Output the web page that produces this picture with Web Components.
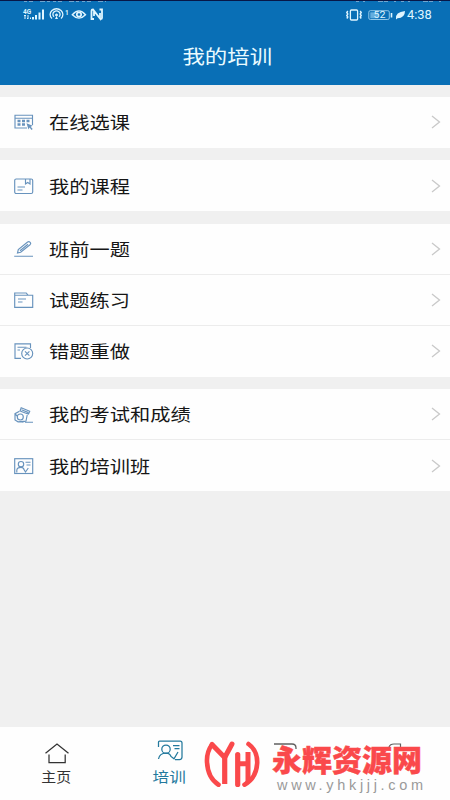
<!DOCTYPE html>
<html lang="zh-CN"><head><meta charset="utf-8"><title>我的培训</title>
<style>html,body{margin:0;height:100%;overflow:hidden}body{font-family:"Noto Sans CJK SC","Liberation Sans",sans-serif;background:#f0f0f0}</style></head>
<body><training-app></training-app>
<script>
const define=(name,html,fill)=>customElements.define(name,class extends HTMLElement{
 constructor(){super();this.attachShadow({mode:'open'}).innerHTML=html;if(fill)fill(this,this.shadowRoot);}
});
const icons={
 select:'<path d="M13 14H1V1.2H18.5V11M1 4.2H18.5"/><path d="M3.5 7h3M8 7h3M12.5 7h3M3.5 10.5h3M8 10.5h3" stroke-width="2.4"/><path d="M12.5 9.3L18.8 11.7L16.7 12.7L18.7 15L17.5 16L15.6 13.6L14.5 15.5Z" fill="#6893bd" stroke="none"/>',
 course:'<rect x=".7" y="1" width="18" height="14.5" rx="1.5"/><path d="M11.5 1V6L13.7 4.5L16 6V1M3.5 9H11M3.5 12H8.5"/>',
 pen:'<path d="M3.5 12L4.3 8.5L13.6 1Q15 .2 16.2 1.4Q17.2 2.5 16 3.7L6.7 11.2ZM6 9.7L14 3.2M.2 15.2H19"/>',
 folder:'<path d="M.7 15.4V1H12.2L14 3.2H18.7V15.4ZM.7 3.2H14M4 7H12M4 10H8.5"/>',
 wrong:'<path d="M7 15.4H1V.8H16.5V5M3.5 4.2H12.5M3.5 7H6"/><circle cx="13.2" cy="10.5" r="5.5"/><path d="M11 8.3L15.4 12.7M15.4 8.3L11 12.7"/>',
 exam:'<path d="M6 4L7.2 .8L15.7 4.2L14.5 7L12.5 6.2M6 4L14 7M5.5 4.2L1 6.7V13L4 14.8L12 14L13.2 8M1 6.7L3 9M8 15.3L12 14M11 15.2H19"/><circle cx="6.3" cy="10" r="3"/><path d="M7.5 2.8L14.5 5.6"/>',
 training:'<rect x=".7" y=".7" width="18" height="14.8"/><circle cx="7" cy="6.2" r="2.7"/><path d="M2.8 14.5V12Q3.2 9.3 7 9.3Q9.5 9.3 10.3 12L11.5 14L14.3 10M11.5 4.2H16.5M12.5 7H16.5"/>'
};
define('ui-icon',`<style>:host{display:block;width:20px;height:17px;flex:none;padding-top:1.4px}svg{display:block;overflow:visible}</style><svg width="20" height="17" fill="none" stroke="#6893bd" stroke-width="1.15"></svg>`,(h,r)=>r.querySelector('svg').innerHTML=icons[h.getAttribute('name')]);
define('menu-row',`<style>:host{display:flex;align-items:center;box-sizing:border-box;height:51px;padding:0 9px 0 14px;background:#fefefe;color:#161616}
:host([line]){border-bottom:1px solid #ececec}.label{margin-left:15px;font-size:17.6px;line-height:24px;white-space:nowrap;transform:scaleX(1.15);transform-origin:left}.arrow{margin-left:auto}</style>
<slot name="icon"></slot><span class="label"><slot></slot></span><svg class="arrow" width="10" height="14" fill="none" stroke="#c9c9c9" stroke-width="1.3"><path d="M1 1L8.5 7L1 13"/></svg>`);
define('menu-group',`<style>:host{display:flex;flex-direction:column;background:#fefefe}</style><slot></slot>`);
define('phone-status',`<style>:host{display:flex;height:29px;padding:0 18px 0 23px;align-items:center;justify-content:space-between;color:#dff5ff;box-sizing:border-box;border-top:1px solid #071747}svg{display:block;overflow:visible}.right{display:flex;align-items:center;gap:2px}.time{font:12.9px/16px Roboto,sans-serif;width:25px;white-space:nowrap}</style>
<svg width="82" height="14" fill="none" stroke="currentColor"><path d="M1 -6.5H83" stroke="#6ea6d0" stroke-width="1" stroke-dasharray="3 2 4 7 5 2 3 3"/><text x="0" y="5.5" font-family="Roboto" font-size="6.5" font-weight="bold" fill="currentColor" stroke="none">4G</text><path d="M2 7V11M1 8L2 7L3 8M5 7V11L4 10M7.5 11v-1.5" stroke-width="1"/><path d="M10 11.5V9M13 11.5V7M16.5 11.5V4.5M20 11.5V1.5" stroke-width="2"/><path d="M29 10.5A6.4 5.7 0 1 1 38 10.5M31.1 8.7A3.6 3.2 0 1 1 35.9 8.7" stroke-width="1.3"/><circle cx="33.5" cy="7" r="1" fill="currentColor"/><path d="M32 11L33.5 8L35 11Z" fill="currentColor" stroke="none"/><text x="42" y="6.5" font-family="Roboto" font-size="6.5" font-weight="bold" fill="currentColor" stroke="none">1</text><path d="M49.3 6.7Q56 -1 62.5 6.7Q56 13.5 49.3 6.7Z" stroke-width="1.4"/><circle cx="56" cy="6.5" r="2.2" stroke-width="1.7"/><path d="M71 11H68.5V2.8Q68.5 1.5 70 1.5L77 10.5V5M76.5 1.5H79V10Q79 11 77.5 11L71 3V8" stroke-width="1.8"/></svg>
<div class="right"><svg width="60" height="14" fill="none" stroke="currentColor"><path d="M11 -6.5H98" stroke="#6ea6d0" stroke-width="1" stroke-dasharray="3 4 2 13 5 1 4 6 2 5"/><rect x="5.4" y="2" width="7.2" height="10" rx="1" stroke-width="1.3"/><path d="M2.8 3l-1 1.5l1 1.5l-1 1.5l1 1.5l-1 1.5M15.2 3l1 1.5l-1 1.5l1 1.5l-1 1.5l1 1.5" stroke-width="1.4"/><rect x="23.8" y="2.7" width="20.5" height="8.8" rx="1.5" stroke="#8fc6e8" stroke-width="1"/><rect x="25.3" y="4.3" width="8" height="6" fill="#65aede" stroke="none"/><path d="M46.5 5v4.5" stroke-width="1.6"/><text x="28.5" y="10.2" font-family="Roboto" font-size="8.8" textLength="12" lengthAdjust="spacingAndGlyphs" fill="currentColor" stroke="none">52</text><path d="M51 11Q50 4 60 3Q60 10 52.5 10.2L51 11.5Z" fill="currentColor" stroke="none"/></svg><span class="time">4:38</span></div>`);
define('app-header',`<style>:host{display:block;height:85px;background:#096fb6}h1{width:fit-content;font-size:19.5px;font-weight:400;line-height:28px;margin:13px auto 0;padding-left:4px;color:#e9fbff;transform:scaleX(1.15)}</style><phone-status></phone-status><h1><slot></slot></h1>`);
define('tab-item',`<style>:host{display:flex;flex-direction:column;align-items:center;width:113px;padding-top:13px;box-sizing:border-box;color:#333}:host([active]){color:#23799d}span{font-size:13.2px;line-height:18px;margin-top:2px;transform:scaleX(1.13)}:host([active]) span{font-size:14.2px;transform:scaleX(1.17);margin-top:1.3px}svg{display:block;overflow:visible}</style><svg width="26" height="26" fill="none" stroke="currentColor" stroke-width="1.25"></svg><span><slot></slot></span>`,(h,r)=>{
 r.querySelector('svg').innerHTML=h.hasAttribute('active')?'<path d="M1.5 7V2Q1.5 1 2.5 1H23.2Q25 1 25 3V17Q25 19.5 22.5 19.5H18M16 5.5H22.5M17.5 8.7H22.5M1.5 19Q2.5 13 9 13Q13 13 14 16.5L17 18.8L21 12"/><circle cx="9" cy="9.2" r="4.2"/>':'<path d="M1.5 13.3L13 4L24.5 13.3M5 14.5V22.5H21.2V14.5"/>';
});
define('tab-bar',`<style>:host{display:flex;height:73px;box-sizing:border-box;background:#fefefe}.peek{width:112px;display:flex;justify-content:center;padding:16px 0 0 7px;box-sizing:border-box}.peek+.peek{padding-left:2px}</style><slot></slot><div class="peek"><svg width="26" height="10" fill="none" stroke="#606060" stroke-width="1.3"><path d="M1 1H19Q23 1 23 5V6"/></svg></div><div class="peek"><svg width="14" height="10" fill="none" stroke="#606060" stroke-width="1.2"><path d="M1 4Q2 1 6 1H12.5V5"/></svg></div>`);
define('site-mark',`<style>:host{position:absolute;left:204px;top:740px;display:block}svg{display:block;overflow:visible}</style><svg width="224" height="58"><g fill="none" stroke="#fa494b" stroke-linecap="round" stroke-linejoin="round"><path d="M8 4.5Q2.5 12 3 22Q3.8 38 14.5 44.7" stroke-width="4.6"/><path d="M44.5 4Q53.5 10.5 53.2 23Q52.5 38 40.5 44.7" stroke-width="4.6"/><path d="M8 4.5L20.7 17.5L28 4" stroke-width="5"/><path d="M20.7 17V44" stroke-width="5.2" stroke-linecap="butt"/><path d="M33.7 14.5V44.5" stroke-width="5.2"/><path d="M34 23.8H44M44 12V42.5" stroke-width="5" stroke-linecap="butt"/></g>
<text x="68" y="31.3" font-family="Noto Sans CJK SC,sans-serif" font-size="29.2" font-weight="900" textLength="150" lengthAdjust="spacingAndGlyphs" fill="#fa494b" stroke="#fa494b" stroke-width=".4">永辉资源网</text><text x="73" y="49.6" font-family="Liberation Sans,sans-serif" font-size="14.5" textLength="146" fill="#9a9a9a">www.yhkjjj.com</text></svg>`);
define('training-app',`<style>:host{display:flex;position:relative;flex-direction:column;width:450px;height:800px;background:#f0f0f0}main{flex:1;display:flex;flex-direction:column;gap:12.6px;padding-top:11.6px}</style>
<app-header>我的培训</app-header><main>
<menu-group><menu-row><ui-icon slot="icon" name="select"></ui-icon>在线选课</menu-row></menu-group>
<menu-group><menu-row><ui-icon slot="icon" name="course"></ui-icon>我的课程</menu-row></menu-group>
<menu-group><menu-row line><ui-icon slot="icon" name="pen"></ui-icon>班前一题</menu-row><menu-row line><ui-icon slot="icon" name="folder"></ui-icon>试题练习</menu-row><menu-row><ui-icon slot="icon" name="wrong"></ui-icon>错题重做</menu-row></menu-group>
<menu-group><menu-row line><ui-icon slot="icon" name="exam"></ui-icon>我的考试和成绩</menu-row><menu-row><ui-icon slot="icon" name="training"></ui-icon>我的培训班</menu-row></menu-group>
</main><tab-bar><tab-item>主页</tab-item><tab-item active>培训</tab-item></tab-bar><site-mark></site-mark>`);
</script></body></html>
